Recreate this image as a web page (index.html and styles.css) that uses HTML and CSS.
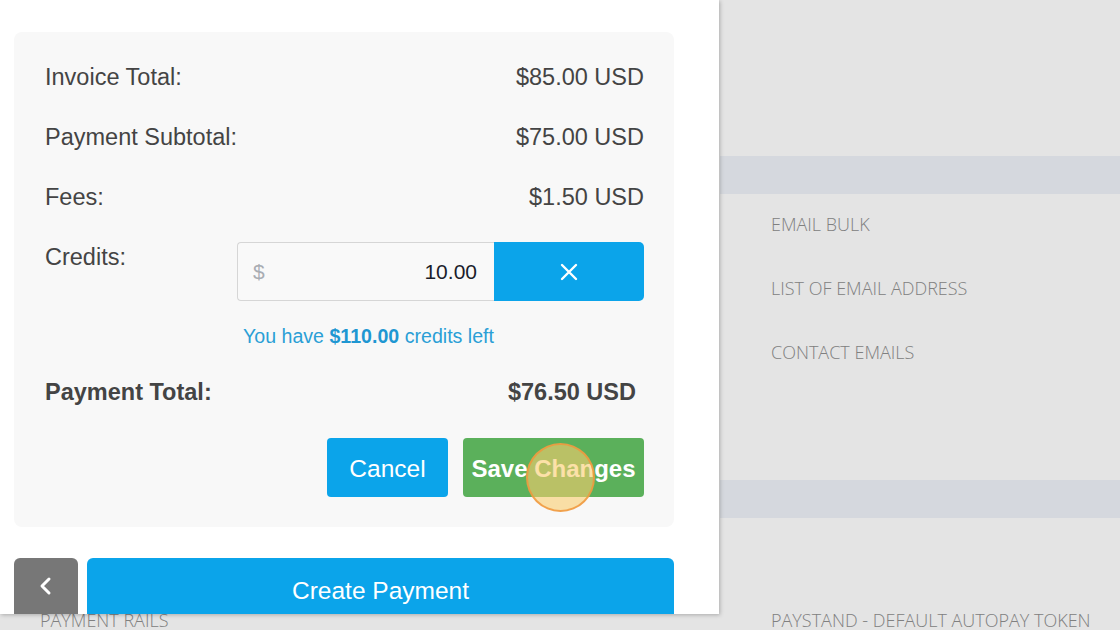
FILE: index.html
```html
<!DOCTYPE html>
<html>
<head>
<meta charset="utf-8">
<link rel="stylesheet" href="styles.css">
</head>
<body>
<div class="page">
  <div class="bg-left">
    <div class="bg-item bg-bottom">PAYMENT RAILS</div>
  </div>
  <div class="bg-right">
    <div class="band band-1"></div>
    <div class="bg-list">
      <div class="bg-item">EMAIL BULK</div>
      <div class="bg-item">LIST OF EMAIL ADDRESS</div>
      <div class="bg-item">CONTACT EMAILS</div>
    </div>
    <div class="band band-2"></div>
    <div class="bg-item bg-bottom">PAYSTAND - DEFAULT AUTOPAY TOKEN</div>
  </div>
</div>

<div class="panel">
  <div class="card">
    <div class="row"><span>Invoice Total:</span><span>$85.00 USD</span></div>
    <div class="row"><span>Payment Subtotal:</span><span>$75.00 USD</span></div>
    <div class="row"><span>Fees:</span><span>$1.50 USD</span></div>
    <div class="row credits">
      <span class="credits-label">Credits:</span>
      <div class="input-group">
        <div class="input"><span class="cur">$</span><span class="val">10.00</span></div>
        <button class="clear" aria-label="clear">
          <svg width="20" height="20" viewBox="0 0 20 20"><path d="M3 3 L17 17 M17 3 L3 17" stroke="#fff" stroke-width="2.4" stroke-linecap="round"/></svg>
        </button>
      </div>
    </div>
    <div class="note">You have <b>$110.00</b> credits left</div>
    <div class="row total"><span>Payment Total:</span><span>$76.50 USD</span></div>
    <div class="actions">
      <button class="btn cancel">Cancel</button>
      <button class="btn save">Save Changes</button>
    </div>
  </div>
  <div class="footer">
    <button class="back" aria-label="back">
      <svg width="14" height="20" viewBox="0 0 14 20"><polyline points="10,3 3,10 10,17" fill="none" stroke="#fff" stroke-width="3" stroke-linecap="round" stroke-linejoin="round"/></svg>
    </button>
    <button class="create">Create Payment</button>
  </div>
  <div class="click-dot"></div>
</div>
</body>
</html>
```

FILE: styles.css
```css
* { box-sizing: border-box; }
html, body { margin: 0; padding: 0; }
body {
  width: 1120px;
  height: 630px;
  overflow: hidden;
  background: #e4e4e4;
  font-family: "Liberation Sans", Arial, sans-serif;
  position: relative;
}
.page {
  display: grid;
  grid-template-columns: 720px 1fr;
  height: 630px;
}
.bg-item {
  font-family: "Open Sans", sans-serif;
  font-size: 18px;
  font-weight: 300;
  color: #808080;
  line-height: 64px;
  white-space: nowrap;
}
.bg-left { padding-top: 608px; padding-left: 40px; }
.bg-bottom { line-height: 24px; }
.bg-right { display: flex; flex-direction: column; }
.band { height: 38px; background: #d5d8de; }
.band-1 { margin-top: 156px; }
.band-2 { margin-top: 96px; }
.bg-list { padding-left: 51px; margin-top: -2px; }
.bg-right > .bg-bottom { padding-left: 51px; margin-top: 90px; }

.panel {
  position: absolute;
  top: 0; left: 0;
  width: 719px;
  height: 614px;
  background: #fff;
  box-shadow: 1px 1px 4px rgba(0,0,0,0.25);
  padding: 32px 45px 0 14px;
  overflow: hidden;
}
.card {
  background: #f8f8f8;
  border-radius: 8px;
  padding: 15px 30px 30px 31px;
  color: #444;
  font-size: 23.5px;
}
.row {
  display: flex;
  justify-content: space-between;
  align-items: center;
  height: 60px;
}
.credits { align-items: flex-start; height: 73px; }
.credits-label { line-height: 60px; }
.input-group {
  display: flex;
  margin-top: 15px;
  height: 59px;
}
.input {
  width: 257px;
  border: 1px solid #d6d6d6;
  border-right: none;
  border-radius: 4px 0 0 4px;
  background: #f9f9f9;
  display: flex;
  align-items: center;
  justify-content: space-between;
  padding: 0 17px 0 15px;
  font-size: 21px;
}
.cur { color: #a9adb3; }
.val { color: #1b1d2b; }
.clear {
  width: 150px;
  border: none;
  background: #0ba4ea;
  border-radius: 0 5px 5px 0;
  display: flex;
  align-items: center;
  justify-content: center;
  padding: 0;
}
.note {
  text-align: center;
  color: #2a9fd6;
  font-size: 19.6px;
  line-height: 24px;
  margin-top: 24px;
  padding-left: 48px;
}
.note b { color: #1f97d2; }
.total {
  height: 40px;
  margin-top: 24px;
  font-weight: bold;
  padding-right: 8px;
}
.actions {
  display: flex;
  justify-content: flex-end;
  gap: 15px;
  margin-top: 26px;
}
.btn {
  height: 59px;
  border: none;
  border-radius: 4px;
  color: #fff;
  font-family: "Liberation Sans", Arial, sans-serif;
  font-size: 24px;
  padding: 2px 0 0 0;
}
.cancel { width: 121px; background: #0ba4ea; font-size: 24.5px; }
.save { width: 181px; background: #5bb05b; font-weight: bold; }
.footer {
  display: flex;
  gap: 9px;
  margin-top: 31px;
}
.back {
  width: 64px;
  height: 66px;
  border: none;
  border-radius: 6px 6px 0 0;
  background: #777;
  display: flex;
  align-items: center;
  justify-content: center;
  padding: 0 0 10px 0;
}
.create {
  flex: 1;
  height: 66px;
  border: none;
  border-radius: 6px 6px 0 0;
  background: #0ba4ea;
  color: #fff;
  font-family: "Liberation Sans", Arial, sans-serif;
  font-size: 24.5px;
  padding: 0;
}
.click-dot {
  position: absolute;
  left: 526px;
  top: 443px;
  width: 69px;
  height: 69px;
  border-radius: 50%;
  background: rgba(250, 205, 110, 0.6);
  border: 2px solid rgba(240, 150, 60, 0.85);
}
```
